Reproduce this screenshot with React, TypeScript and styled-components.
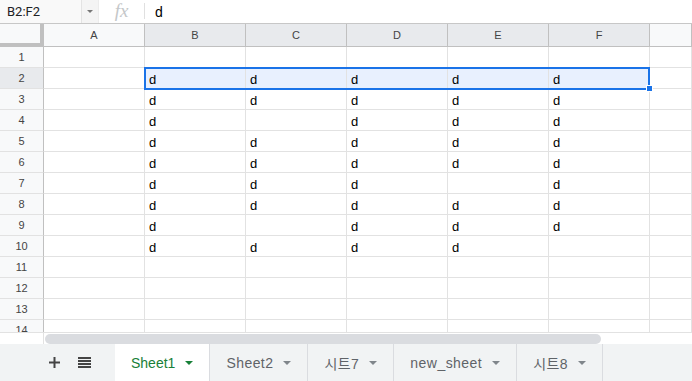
import React from "react";
import styled, { createGlobalStyle } from "styled-components";

const Global = createGlobalStyle`
  html, body { margin: 0; padding: 0; background: #fff; overflow: hidden; }
  body { font-family: "Liberation Sans", Arial, sans-serif; }
  * { box-sizing: border-box; }
`;

const Page = styled.div`
  width: 692px;
  height: 381px;
  display: flex;
  flex-direction: column;
  overflow: hidden;
  background: #fff;
`;

const FormulaBar = styled.div`
  height: 24px;
  flex: none;
  display: flex;
  align-items: stretch;
  border-bottom: 1px solid #c7c7c7;
  background: #fff;
`;

const NameBox = styled.div`
  width: 82px;
  display: flex;
  align-items: center;
  padding-left: 7px;
  font-family: Roboto, "Liberation Sans", Arial, sans-serif;
  font-size: 13px;
  color: #202124;
  background: #f9f9f9;
  border-right: 1px solid #e3e3e3;
`;

const NameDrop = styled.div`
  width: 17px;
  display: flex;
  align-items: center;
  justify-content: center;
  background: #f4f4f4;
  border-right: 1px solid #ececec;
`;

const SmallTri = styled.span<{ $color: string; $w?: number }>`
  display: inline-block;
  width: 0;
  height: 0;
  border-left: ${(p) => (p.$w ?? 8) / 2}px solid transparent;
  border-right: ${(p) => (p.$w ?? 8) / 2}px solid transparent;
  border-top: ${(p) => (p.$w ?? 8) / 2}px solid ${(p) => p.$color};
`;

const Fx = styled.div`
  width: 45px;
  display: flex;
  align-items: center;
  justify-content: center;
  font-family: "Liberation Serif", "Times New Roman", serif;
  font-style: italic;
  font-size: 19px;
  color: #c4c7c9;
  padding-bottom: 2px;
`;

const FxSep = styled.div`
  width: 1px;
  margin: 3px 0 4px;
  background: #e0e0e0;
`;

const FormulaText = styled.div`
  display: flex;
  align-items: center;
  padding-left: 10px;
  font-size: 14px;
  color: #000;
`;

const GridWrap = styled.div`
  position: relative;
  height: 308px;
  flex: none;
  overflow: hidden;
`;

const Grid = styled.div`
  display: grid;
  grid-template-columns: 44px repeat(6, 101px) 1fr;
  grid-template-rows: 23px;
  grid-auto-rows: 21px;
`;

const Corner = styled.div`
  background: #f8f9fa;
  border-right: 4px solid #c0c0c0;
  border-bottom: 4px solid #c0c0c0;
`;

const ColHead = styled.div<{ $sel?: boolean }>`
  display: flex;
  align-items: center;
  justify-content: center;
  font-size: 11px;
  color: #444;
  background: ${(p) => (p.$sel ? "#e8eaed" : "#f8f9fa")};
  border-right: 1px solid #c0c0c0;
  border-bottom: 1px solid #c0c0c0;
  padding-bottom: 1px;
`;

const RowHead = styled.div<{ $sel?: boolean }>`
  display: flex;
  align-items: center;
  justify-content: center;
  font-size: 11px;
  color: #444;
  background: ${(p) => (p.$sel ? "#e8eaed" : "#f8f9fa")};
  border-right: 1px solid #c0c0c0;
  border-bottom: 1px solid #e2e2e2;
`;

const Cell = styled.div<{ $sel?: boolean }>`
  display: flex;
  align-items: flex-end;
  padding: 0 3px 0 4px;
  font-size: 13px;
  line-height: 16px;
  color: #000;
  background: ${(p) => (p.$sel ? "#e8f0fe" : "#fff")};
  border-right: 1px solid #e2e2e2;
  border-bottom: 1px solid #e2e2e2;
  white-space: nowrap;
  overflow: hidden;
`;

const Selection = styled.div`
  position: absolute;
  left: 144px;
  top: 43px;
  width: 506px;
  height: 23px;
  border: 2px solid #1a73e8;
  pointer-events: none;
`;

const Handle = styled.div`
  position: absolute;
  right: -5px;
  bottom: -4px;
  width: 7px;
  height: 7px;
  background: #1a73e8;
  border: 1px solid #fff;
`;

const ScrollRow = styled.div`
  height: 12px;
  flex: none;
  display: flex;
  align-items: center;
  border-top: 1px solid #e2e2e2;
  background: #fff;
`;

const ScrollGutter = styled.div`
  width: 44px;
  align-self: stretch;
  border-right: 1px solid #e2e2e2;
`;

const Thumb = styled.div`
  margin-left: 1px;
  width: 556px;
  height: 10px;
  border-radius: 5px;
  background: #dadce0;
`;

const TabBar = styled.div`
  flex: 1;
  display: flex;
  align-items: stretch;
  background: #f1f3f4;
  padding-left: 47px;
`;

const IconBtn = styled.div`
  width: 15px;
  display: flex;
  align-items: center;
  justify-content: center;
  margin-right: 15px;
`;

const Tab = styled.div<{ $active?: boolean }>`
  display: flex;
  align-items: center;
  gap: 10px;
  padding: 1px 16px 0 16px;
  font-size: 14px;
  letter-spacing: ${(p) => (p.$active ? "0" : "0.45px")};
  color: ${(p) => (p.$active ? "#188038" : "#5f6368")};
  background: ${(p) => (p.$active ? "#fff" : "transparent")};
  border-right: 1px solid #dadce0;
  font-family: "Liberation Sans", Arial, "Noto Sans CJK KR", sans-serif;
`;

const TabsStart = styled.div`
  width: 8px;
`;

const cols = ["A", "B", "C", "D", "E", "F", ""];
const data: string[] = [
  "",
  "BCDEF",
  "BCDEF",
  "B DEF",
  "BCDEF",
  "BCDEF",
  "BCD F",
  "BCDEF",
  "B DEF",
  "BCDE ",
  "",
  "",
  "",
  "",
];

const tabs = ["Sheet1", "Sheet2", "시트7", "new_sheet", "시트8"];

export default function App() {
  return (
    <Page>
      <Global />
      <FormulaBar>
        <NameBox>B2:F2</NameBox>
        <NameDrop>
          <SmallTri $color="#777" $w={6} />
        </NameDrop>
        <Fx>fx</Fx>
        <FxSep />
        <FormulaText>d</FormulaText>
      </FormulaBar>
      <GridWrap>
        <Grid>
          <Corner />
          {cols.map((c, i) => (
            <ColHead key={i} $sel={i >= 1 && i <= 5}>
              {c}
            </ColHead>
          ))}
          {data.map((row, r) => (
            <React.Fragment key={r}>
              <RowHead $sel={r === 1}>{r + 1}</RowHead>
              {cols.map((c, ci) => {
                const has = c !== "" && row.includes(c);
                return (
                  <Cell key={ci} $sel={r === 1 && ci >= 1 && ci <= 5}>
                    {has ? "d" : ""}
                  </Cell>
                );
              })}
            </React.Fragment>
          ))}
        </Grid>
        <Selection>
          <Handle />
        </Selection>
      </GridWrap>
      <ScrollRow>
        <ScrollGutter />
        <Thumb />
      </ScrollRow>
      <TabBar>
        <IconBtn>
          <svg width="11" height="11" viewBox="0 0 11 11">
            <path d="M5.5 0v11M0 5.5h11" stroke="#444" strokeWidth="2" />
          </svg>
        </IconBtn>
        <IconBtn>
          <svg width="13" height="11" viewBox="0 0 13 11">
            <path d="M0 1h13M0 4h13M0 7h13M0 10h13" stroke="#444" strokeWidth="2" />
          </svg>
        </IconBtn>
        <TabsStart />
        {tabs.map((t, i) => (
          <Tab key={t} $active={i === 0}>
            {t}
            <SmallTri $color={i === 0 ? "#188038" : "#80868b"} $w={8} />
          </Tab>
        ))}
      </TabBar>
    </Page>
  );
}
